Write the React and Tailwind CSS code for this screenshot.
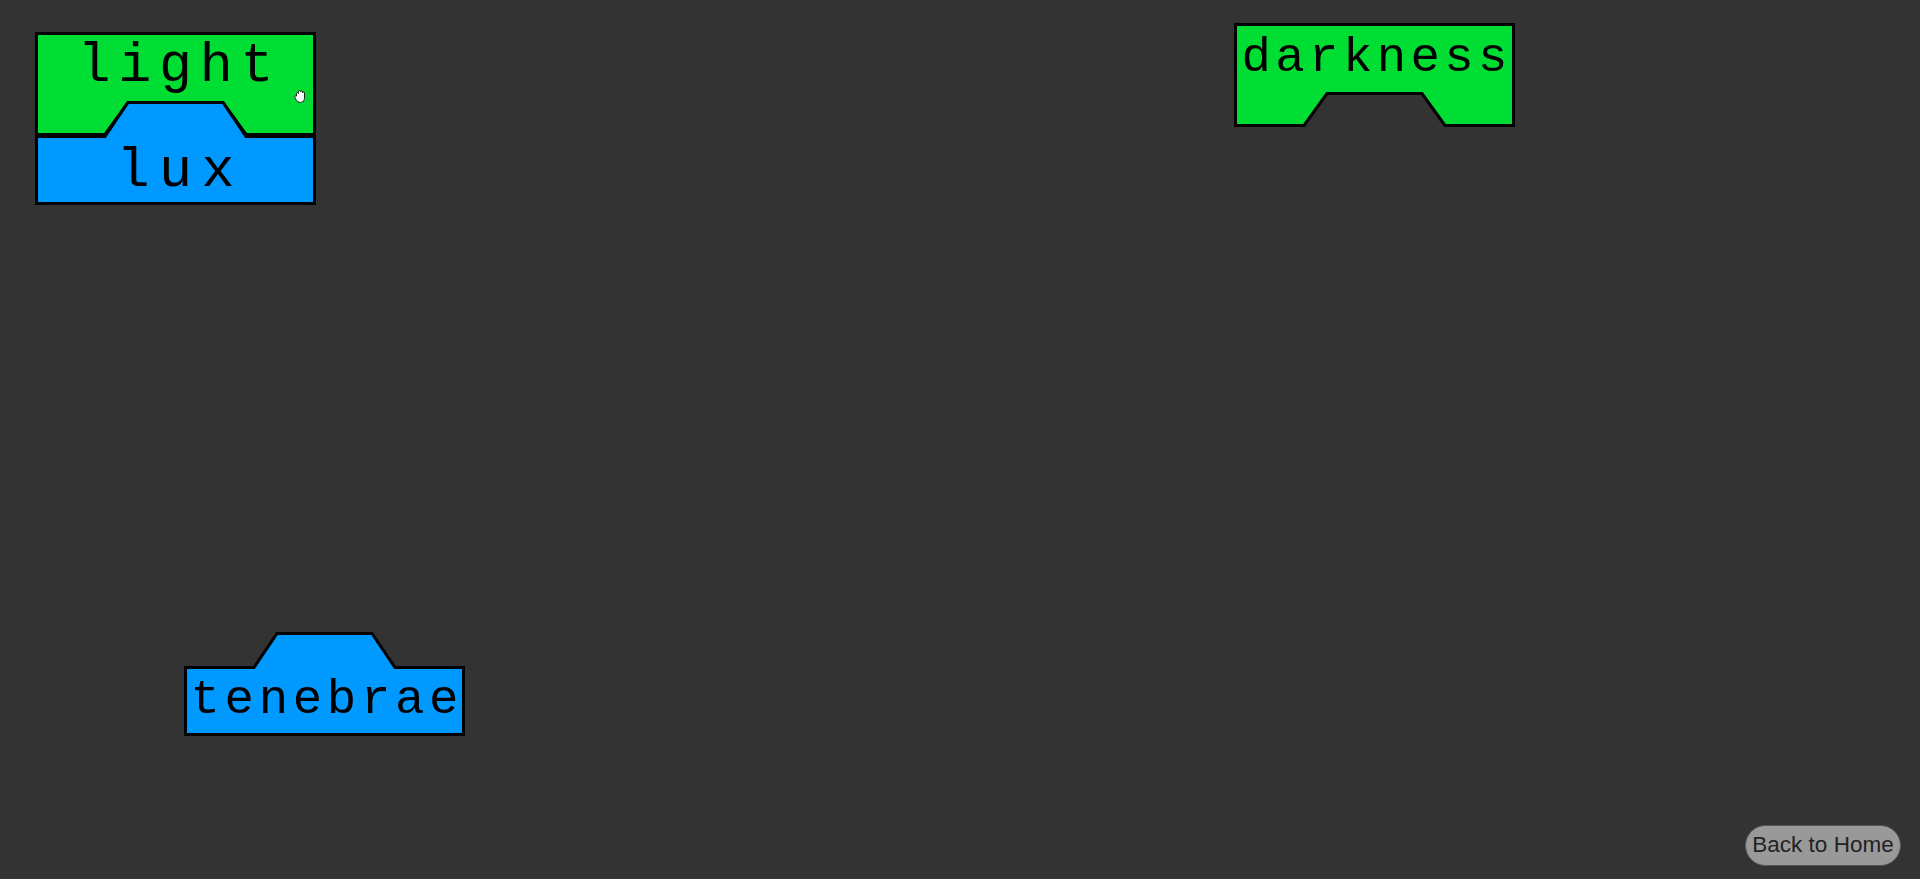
import React from "react";

const GREEN = "#00dd33";
const BLUE = "#0099ff";

// bottom-notched block (output piece)
const NOTCH = "M1.5 1.5 H279.5 V102.5 H211 L188 70.5 H93 L70 102.5 H1.5 Z";
// top-tabbed block (input piece)
const TAB = "M1.5 35.5 H70 L93 1.5 H188 L211 35.5 H279.5 V102.5 H1.5 Z";

function Block({ x, y, kind, label, size, baseline, span }) {
  const fill = kind === "out" ? GREEN : BLUE;
  return (
    <svg
      className="absolute font-['Liberation_Mono','Courier_New',monospace]"
      style={{ left: x, top: y }}
      width="281"
      height="104"
      viewBox="0 0 281 104"
    >
      <path d={kind === "out" ? NOTCH : TAB} fill={fill} stroke="#000" strokeWidth="3" strokeLinejoin="miter" />
      <text
        x="140.5"
        y={baseline}
        textAnchor="middle"
        fontSize={size}
        fill="#000"
        textLength={span}
        lengthAdjust="spacing"
      >
        {label}
      </text>
    </svg>
  );
}

function HandCursor({ x, y }) {
  return (
    <svg className="absolute" style={{ left: x, top: y }} width="15" height="15" viewBox="0 0 15 15">
      <path
        d="M3.5 7 V4.5 Q3.5 3.5 4.5 3.5 Q5.5 3.5 5.5 4.5 V2.5 Q5.5 1.5 6.5 1.5 Q7.5 1.5 7.5 2.5 V3 Q7.5 2 8.5 2 Q9.5 2 9.5 3 V4 Q9.5 3 10.5 3 Q11.5 3 11.5 4 V9.5 Q11.5 13.5 7.5 13.5 Q4.5 13.5 3 10.5 L1.8 8.3 Q1.5 7 2.6 7 Z"
        fill="#fff"
        stroke="#222"
        strokeWidth="1"
      />
    </svg>
  );
}

export default function App() {
  return (
    <div className="flex h-screen w-full flex-col bg-[#333333]">
      <div className="relative flex-1">
        <Block x={35} y={32} kind="out" label="light" size={55} baseline={49} span={196} />
        <Block x={35} y={101} kind="in" label="lux" size={55} baseline={85} span={118} />
        <HandCursor x={293} y={89} />
        <Block x={1234} y={23} kind="out" label="darkness" size={49} baseline={48} span={266} />
        <Block x={184} y={632} kind="in" label="tenebrae" size={49} baseline={81} span={268} />
      </div>
      <div className="flex justify-end pb-[13px] pr-[19px]">
        <button className="h-[41px] w-[156px] rounded-full border border-[#555] bg-[#999999] font-['Liberation_Sans',Arial,sans-serif] text-[22.5px] leading-none text-[#222]">
          Back to Home
        </button>
      </div>
    </div>
  );
}
